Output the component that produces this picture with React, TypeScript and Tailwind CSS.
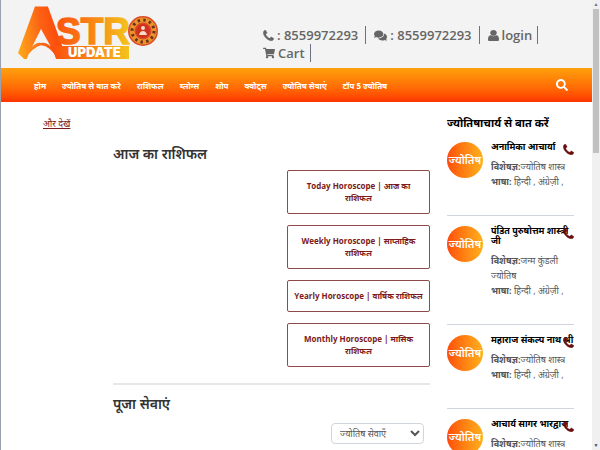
import { FaComments, FaShoppingCart, FaSearch } from "react-icons/fa";

const menu = ["होम", "ज्योतिष से बात करे", "राशिफल", "ब्लोग्स", "शोप", "क्वोट्स", "ज्योतिष सेवाएं", "टॉप 5 ज्योतिष"];

const horoscopes = [
  "Today Horoscope | आज का राशिफल",
  "Weekly Horoscope | साप्ताहिक राशिफल",
  "Yearly Horoscope | वार्षिक राशिफल",
  "Monthly Horoscope | मासिक राशिफल",
];

const astrologers = [
  { name: "अनामिका आचार्या", skill: "ज्योतिष शास्त्र" },
  { name: "पंडित पुरुषोत्तम शास्त्री जी", skill: "जन्म कुंडली ज्योतिष" },
  { name: "महाराज संकल्प नाथ श्री", skill: "ज्योतिष शास्त्र" },
  { name: "आचार्य सागर भारद्वाज", skill: "ज्योतिष शास्त्र" },
];

const PhoneIcon = () => (
  <svg className="size-[11px]" viewBox="160 96 1472 1472" fill="currentColor" stroke="currentColor" strokeWidth="50" aria-hidden="true">
    <path d="M1600 1240q0 27-10 70.5t-21 68.5q-21 50-122 106-94 51-186 51-27 0-53-3.5t-57.5-12.5-47-14.5-55.5-20.5-49-18q-98-35-175-83-127-79-264-216t-216-264q-48-77-83-175-3-9-18-49t-20.5-55.5-14.5-47-12.5-57.5-3.5-53q0-92 51-186 56-101 106-122 25-11 68.5-21t70.5-10q14 0 21 3 18 6 53 76 11 19 30 54t35 63.5 31 53.5q3 4 17.5 25t21.5 35.5 7 28.5q0 20-28.5 50t-62 55-62 53-28.5 46q0 9 5 22.5t8.5 20.5 14 24 11.5 19q76 137 174 235t235 174q2 1 19 11.5t24 14 20.5 8.5 22.5 5q18 0 46-28.5t53-62 55-62 50-28.5q14 0 28.5 7t35.5 21.5 25 17.5q25 15 53.5 31t63.5 35 54 30q70 35 76 53 3 7 3 21z" />
  </svg>
);

const UserIcon = () => (
  <svg className="size-[11px]" viewBox="0 0 1280 1472" fill="currentColor" preserveAspectRatio="none" aria-hidden="true">
    <path d="M1280 1271q0 109-62.5 187t-150.5 78h-854q-88 0-150.5-78t-62.5-187q0-85 8.5-160.5t31.5-152 58.5-131 94-89 134.5-34.5q131 128 313 128t313-128q76 0 134.5 34.5t94 89 58.5 131 31.5 152 8.5 160.5zm-256-887q0 159-112.5 271.5t-271.5 112.5-271.5-112.5-112.5-271.5 112.5-271.5 271.5-112.5 271.5 112.5 112.5 271.5z" />
  </svg>
);

const Logo = () => (
  <svg width="148" height="60" viewBox="11 2 148 60" overflow="visible" role="img" aria-label="Astro Update">
    <defs>
      <linearGradient id="mark" gradientUnits="userSpaceOnUse" x1="18" y1="34" x2="56" y2="28">
        <stop offset="0" stopColor="#ffa31a" />
        <stop offset="0.6" stopColor="#fb6414" />
        <stop offset="1" stopColor="#fc4c0c" />
      </linearGradient>
      <linearGradient id="word" gradientUnits="userSpaceOnUse" x1="50" y1="30" x2="130" y2="30">
        <stop offset="0" stopColor="#fc4c0c" />
        <stop offset="0.5" stopColor="#f98214" />
        <stop offset="1" stopColor="#f3c51c" />
      </linearGradient>
    </defs>
    <text x="14" y="59" fontFamily="Liberation Sans, sans-serif" fontWeight="700" fontSize="76" fill="url(#mark)">A</text>
    {/* arrow head in the middle of the mark */}
    <path d="M41 8L54 47L58 59Q50 46 41 45Q32 48 25 59L29 44Z" fill="url(#mark)" />
    <path d="M41 29L32 47Q37 42 41 43Q46 42 51 47Z" fill="#f3f3f3" />
    <path d="M26 60Q33 49 41 46Q49 48 56 60Z" fill="#f3f3f3" />
    <path d="M12 61L17 52L26 61Z" fill="#f3f3f3" />
    <text x="56" y="44" fontFamily="Liberation Sans, sans-serif" fontWeight="700" fontSize="37" fill="url(#word)" stroke="url(#word)" strokeWidth="1.5">STR</text>
    <path d="M50 46H129V59H57Z" fill="url(#word)" />
    <text x="68" y="57" fontFamily="Inter, sans-serif" fontWeight="900" fontSize="13" fill="#fff">UPDATE</text>
    <circle cx="143" cy="31" r="15" fill="#dc4a26" />
    <circle cx="143" cy="31" r="11" fill="none" stroke="#e8932c" strokeWidth="5" />
    <circle cx="143" cy="31" r="11" fill="none" stroke="#6e2d18" strokeWidth="3" strokeDasharray="2.4 3.36" />
    <circle cx="143" cy="31" r="7" fill="#d0311f" />
    <circle cx="143" cy="28" r="2" fill="#f7dcc6" />
    <path d="M139 35Q140 31 143 31Q146 31 147 35Z" fill="#f7dcc6" />
  </svg>
);

const App = () => {
  return (
    <div className="flex h-screen overflow-hidden bg-white font-['Open_Sans','Noto_Sans',sans-serif] text-[#333]">
      <div className="min-w-0 flex-1 border-l border-gray-400">
        <header className="flex h-[68px] items-start bg-[#f3f3f3] pt-[2px] pl-[10px]">
          <a href="#"><Logo /></a>
          <div className="ml-[104px] flex flex-1 flex-wrap pt-6 text-[13px] leading-[18px] font-semibold text-[#666]">
            <a href="#" className="mr-2 flex items-center gap-[3px] border-r border-gray-500 pr-[7px]"><PhoneIcon /> : 8559972293</a>
            <a href="#" className="mr-2 flex items-center gap-[3px] border-r border-gray-500 pr-[7px]"><FaComments className="size-[13px]" /> : 8559972293</a>
            <a href="#" className="mr-2 flex items-center gap-[3px] border-r border-gray-500 pr-[5px]"><UserIcon /> login</a>
            <a href="#" className="flex items-center gap-[3px] border-r border-gray-500 pr-[5px]"><FaShoppingCart className="size-3" /> Cart</a>
          </div>
        </header>

        <nav className="flex h-[34px] items-center bg-linear-to-b from-[#ffa00d] to-[#ff3300] pr-6 pl-[33px] text-white">
          <ul className="flex flex-1 gap-4 pt-px text-[8px] font-bold">
            {menu.map((item) => (
              <li key={item}><a href="#">{item}</a></li>
            ))}
          </ul>
          <button aria-label="Search"><FaSearch className="size-3" /></button>
        </nav>

        <div className="flex pr-[18px] pl-[42px]">
          <div className="w-[70px] pt-[15px] text-[9px] leading-[14px] text-[#7a1a1a]">
            <a href="#" className="underline">और देखें</a>
          </div>

          <main className="min-w-0 flex-1 pt-[42px]">
            <h2 className="text-[14px] leading-5 font-semibold">आज का राशिफल</h2>
            <div className="mt-[6px] ml-auto flex w-[143px] flex-col gap-[11px]">
              {horoscopes.map((item) => (
                <button key={item} className="rounded-xs border border-[#8d4b4b] px-[5px] py-[9px] text-[8px] leading-3 font-bold text-[#7a1a1a]">{item}</button>
              ))}
            </div>
            <hr className="mt-4 border-t-2 border-gray-200" />
            <h2 className="mt-[9px] text-[14px] leading-5 font-semibold">पूजा सेवाएं</h2>
            <select aria-label="ज्योतिष सेवाएँ" className="mt-[9px] mr-[6px] ml-auto block h-[21px] w-[93px] rounded-sm border border-gray-300 bg-white px-1 text-[9px] text-[#555]">
              <option>ज्योतिष सेवाएँ</option>
            </select>
          </main>

          <aside className="ml-[17px] w-[127px] shrink-0 pt-3">
            <h3 className="text-[11px] leading-[18px] font-bold text-black">ज्योतिषाचार्य से बात करें</h3>
            {astrologers.map((person) => (
              <article key={person.name} className="flex border-b border-gray-300 pt-[10px] pb-[26px]">
                <div className="flex size-9 shrink-0 items-center justify-center rounded-full bg-linear-to-r from-[#ff4a0a] to-[#ffb01c] text-[11px] font-semibold text-white">ज्योतिष</div>
                <div className="relative ml-2 flex-1 text-[9px] leading-[15px] text-[#555]">
                  <h4 className="mb-[7px] text-[9px] leading-[10px] font-bold text-black">{person.name}</h4>
                  <a href="#" aria-label="Call" className="absolute top-[2px] right-0 text-[#6b0f0f]"><PhoneIcon /></a>
                  <p><b>विशेषज्ञ:</b>{person.skill}</p>
                  <p><b>भाषा:</b> हिन्दी , अंग्रेज़ी ,</p>
                </div>
              </article>
            ))}
          </aside>
        </div>
      </div>

      {/* scrollbar */}
      <div className="flex w-2 flex-col items-center bg-[#f0f0f0]">
        <span className="h-[9px] text-[5px] leading-[9px] text-gray-500">▲</span>
        <div className="h-[144px] w-[6px] bg-[#c1c1c1]" />
        <span className="mt-auto h-[9px] text-[5px] leading-[9px] text-gray-700">▼</span>
      </div>
    </div>
  );
};

export default App;
